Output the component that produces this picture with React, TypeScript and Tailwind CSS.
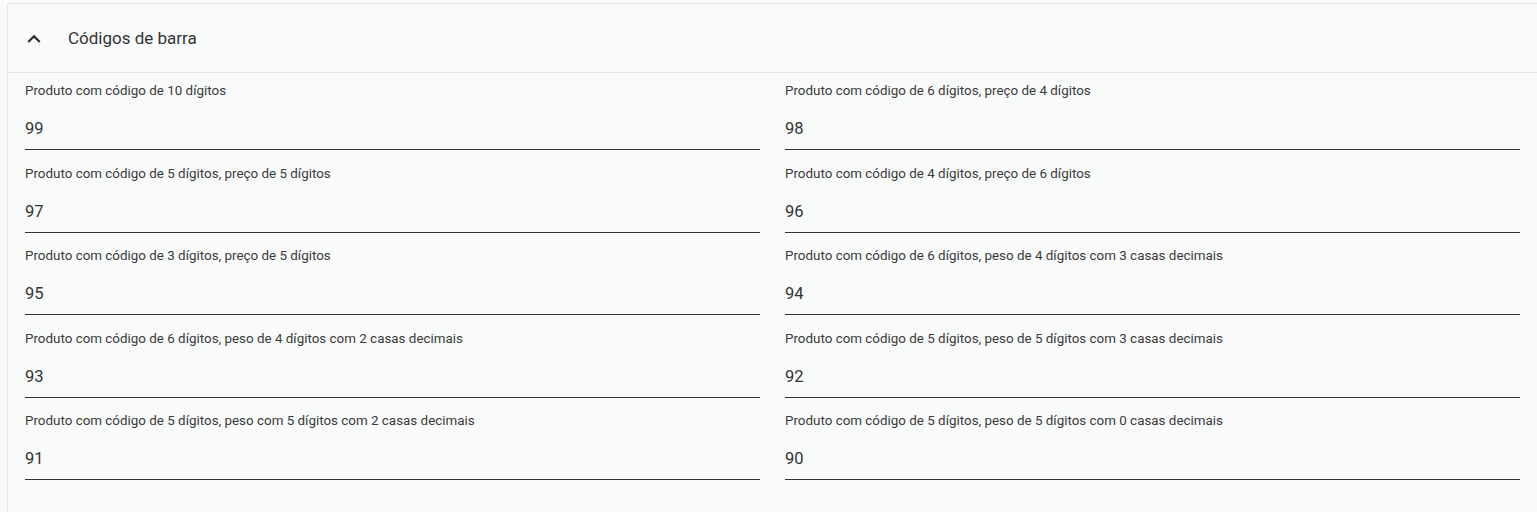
import React from "react";

type Field = { label: string; value: string };

const fields: Field[] = [
  { label: "Produto com código de 10 dígitos", value: "99" },
  { label: "Produto com código de 6 dígitos, preço de 4 dígitos", value: "98" },
  { label: "Produto com código de 5 dígitos, preço de 5 dígitos", value: "97" },
  { label: "Produto com código de 4 dígitos, preço de 6 dígitos", value: "96" },
  { label: "Produto com código de 3 dígitos, preço de 5 dígitos", value: "95" },
  { label: "Produto com código de 6 dígitos, peso de 4 dígitos com 3 casas decimais", value: "94" },
  { label: "Produto com código de 6 dígitos, peso de 4 dígitos com 2 casas decimais", value: "93" },
  { label: "Produto com código de 5 dígitos, peso de 5 dígitos com 3 casas decimais", value: "92" },
  { label: "Produto com código de 5 dígitos, peso com 5 dígitos com 2 casas decimais", value: "91" },
  { label: "Produto com código de 5 dígitos, peso de 5 dígitos com 0 casas decimais", value: "90" },
];

const BarcodeField: React.FC<Field> = ({ label, value }) => (
  <label className="flex flex-col border-b border-[#2f3332]">
    <span className="mt-px h-4 text-[13.4px] leading-4 text-[#3a3a3a]">{label}</span>
    <input
      readOnly
      value={value}
      className="mt-[18px] mb-[8px] h-6 bg-transparent text-[16.5px] leading-6 text-[#333] outline-none"
    />
  </label>
);

export default function App() {
  return (
    <div className="min-h-[512px] bg-[#f9fbfb] pt-[3px] pl-[7px] font-['Roboto','Liberation_Sans',sans-serif]">
      <section className="border-l border-t border-[#e5e8e8] bg-[#f9fbfb] pb-8">
        {/* Header */}
        <div className="flex h-[69px] items-center border-b border-[#e5e8e8] pt-[2px]">
          <svg
            viewBox="0 0 24 24"
            className="ml-[13px] h-[26px] w-[26px] text-[#2b2b2b]"
            fill="currentColor"
            aria-hidden="true"
          >
            <path d="M7.41 15.41 12 10.83l4.59 4.58L18 14l-6-6-6 6z" />
          </svg>
          <h2 className="ml-[21px] text-[17px] text-[#333]">Códigos de barra</h2>
        </div>

        {/* Fields */}
        <div className="grid grid-cols-2 gap-x-[25px] gap-y-[14.5px] px-[17px] pt-[9px]">
          {fields.map((f) => (
            <BarcodeField key={f.value} label={f.label} value={f.value} />
          ))}
        </div>
      </section>
    </div>
  );
}
